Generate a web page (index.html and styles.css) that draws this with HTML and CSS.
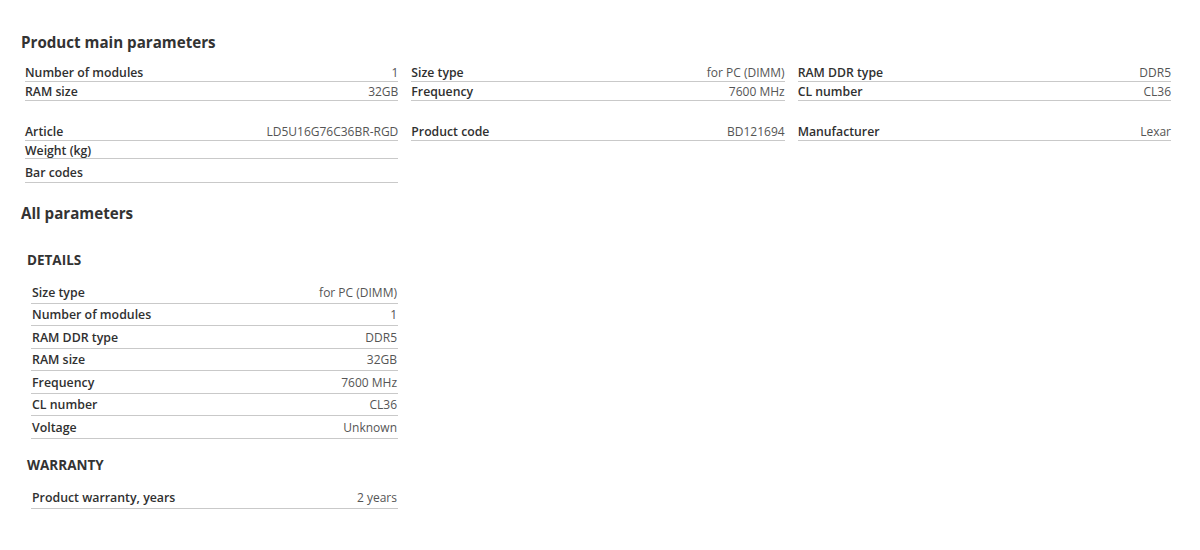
FILE: index.html
```html
<!DOCTYPE html>
<html lang="en">
<head>
<meta charset="utf-8">
<title>Product parameters</title>
<link rel="stylesheet" href="styles.css">
</head>
<body>
<div class="page">
  <h2 class="section-title">Product main parameters</h2>

  <div class="main-grid">
    <div class="col">
      <div class="row"><span class="label">Number of modules</span><span class="value">1</span></div>
      <div class="row"><span class="label">RAM size</span><span class="value">32GB</span></div>
    </div>
    <div class="col">
      <div class="row"><span class="label">Size type</span><span class="value">for PC (DIMM)</span></div>
      <div class="row"><span class="label">Frequency</span><span class="value">7600 MHz</span></div>
    </div>
    <div class="col">
      <div class="row"><span class="label">RAM DDR type</span><span class="value">DDR5</span></div>
      <div class="row"><span class="label">CL number</span><span class="value">CL36</span></div>
    </div>
  </div>

  <div class="main-grid main-grid--second">
    <div class="col">
      <div class="row"><span class="label">Article</span><span class="value">LD5U16G76C36BR-RGD</span></div>
      <div class="row row--short"><span class="label">Weight (kg)</span><span class="value"></span></div>
      <div class="row row--tall"><span class="label">Bar codes</span><span class="value"></span></div>
    </div>
    <div class="col">
      <div class="row"><span class="label">Product code</span><span class="value">BD121694</span></div>
    </div>
    <div class="col">
      <div class="row"><span class="label">Manufacturer</span><span class="value">Lexar</span></div>
    </div>
  </div>

  <h2 class="section-title section-title--all">All parameters</h2>

  <div class="group">
    <h3 class="group-title">DETAILS</h3>
    <div class="group-list">
      <div class="row row--detail"><span class="label">Size type</span><span class="value">for PC (DIMM)</span></div>
      <div class="row row--detail"><span class="label">Number of modules</span><span class="value">1</span></div>
      <div class="row row--detail"><span class="label">RAM DDR type</span><span class="value">DDR5</span></div>
      <div class="row row--detail"><span class="label">RAM size</span><span class="value">32GB</span></div>
      <div class="row row--detail"><span class="label">Frequency</span><span class="value">7600 MHz</span></div>
      <div class="row row--detail"><span class="label">CL number</span><span class="value">CL36</span></div>
      <div class="row row--detail"><span class="label">Voltage</span><span class="value">Unknown</span></div>
    </div>
  </div>

  <div class="group group--warranty">
    <h3 class="group-title">WARRANTY</h3>
    <div class="group-list">
      <div class="row row--detail"><span class="label">Product warranty, years</span><span class="value">2 years</span></div>
    </div>
  </div>
</div>
</body>
</html>
```

FILE: styles.css
```css
* { box-sizing: border-box; }

html, body {
  margin: 0;
  padding: 0;
  background: #ffffff;
}

body {
  font-family: "Open Sans", "Liberation Sans", Arial, sans-serif;
  color: #333;
}

.page {
  padding: 32px 0 0 21px;
  width: 1175px;
}

.section-title {
  margin: 0;
  font-size: 15.15px;
  line-height: 20px;
  font-weight: 700;
  color: #333;
}

.section-title--all {
  margin-top: 20px;
}

.main-grid {
  display: grid;
  grid-template-columns: repeat(3, 1fr);
  column-gap: 13px;
  align-items: start;
  margin: 11px 0 0 4px;
  width: 1146px;
}

.main-grid--second {
  margin-top: 21px;
}

.col {
  display: flex;
  flex-direction: column;
}

.row {
  display: flex;
  justify-content: space-between;
  align-items: center;
  height: 19px;
  padding-top: 2px;
  border-bottom: 1px solid #c9c9c9;
  font-size: 12px;
  line-height: 18px;
}

.row--short { height: 18px; }
.row--tall { height: 24px; padding-top: 4px; }

.label {
  font-weight: 600;
  font-size: 12.25px;
  color: #303030;
}

.value {
  font-weight: 400;
  color: #555;
}

.group {
  margin: 28px 0 0 6px;
}

.group--warranty {
  margin-top: 17px;
}

.group-title {
  margin: 0;
  font-size: 13.5px;
  line-height: 18px;
  font-weight: 700;
  color: #333;
}

.group-list {
  margin: 12px 0 0 4px;
  width: 367px;
  display: flex;
  flex-direction: column;
}

.group--warranty .group-list {
  margin-top: 13px;
}

.row--detail {
  height: 22.5px;
  padding: 2px 1px 0;
}

.row--detail .label {
  font-size: 12.35px;
}
```
